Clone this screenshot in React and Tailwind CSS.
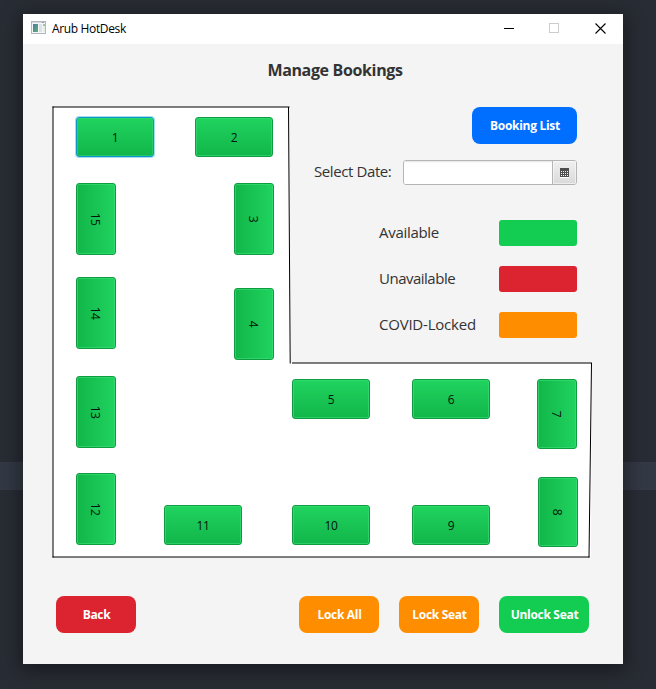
const UI_FONT = "font-['Open_Sans','Noto_Sans',sans-serif]";

// Desk positions are relative to the floor plan's top-left corner.
const desks = [
  { id: 1, x: 24, y: 11, w: 78, h: 40, focused: true },
  { id: 2, x: 143, y: 11, w: 78, h: 40 },
  { id: 3, x: 182, y: 77, w: 40, h: 72 },
  { id: 4, x: 182, y: 182, w: 40, h: 72 },
  { id: 5, x: 240, y: 273, w: 78, h: 40 },
  { id: 6, x: 360, y: 273, w: 78, h: 40 },
  { id: 7, x: 485, y: 273, w: 40, h: 70 },
  { id: 8, x: 486, y: 371, w: 40, h: 70 },
  { id: 9, x: 360, y: 399, w: 78, h: 40 },
  { id: 10, x: 240, y: 399, w: 78, h: 40 },
  { id: 11, x: 112, y: 399, w: 78, h: 40 },
  { id: 12, x: 24, y: 367, w: 40, h: 72 },
  { id: 13, x: 24, y: 270, w: 40, h: 72 },
  { id: 14, x: 24, y: 171, w: 40, h: 72 },
  { id: 15, x: 24, y: 77, w: 40, h: 72 },
];

const legend = [
  { label: "Available", color: "bg-[#13cc52]", tracking: "tracking-[-0.3px]" },
  { label: "Unavailable", color: "bg-[#dc2430]", tracking: "tracking-[-0.5px]" },
  { label: "COVID-Locked", color: "bg-[#ff8d00]", tracking: "tracking-[-0.22px]" },
];

function Desk({ desk }) {
  const vertical = desk.h > desk.w;
  return (
    <button
      className={`absolute flex items-center justify-center rounded-[3px] border text-[12px] leading-none text-[#02140a] ${
        vertical
          ? "bg-linear-to-l from-[#20d35f] to-[#11b649] pr-0.5"
          : "bg-linear-to-b from-[#20d35f] to-[#11b649] pt-0.5"
      } ${
        desk.focused
          ? "border-[#0a96c9] shadow-[0_0_0_1px_rgba(3,158,211,0.35),inset_0_0_0_1px_rgba(60,220,130,0.45)]"
          : "border-[#0f9c40] shadow-[inset_0_0_0_1px_rgba(60,224,120,0.6)]"
      }`}
      style={{ left: desk.x, top: desk.y, width: desk.w, height: desk.h }}
    >
      <span className={vertical ? "rotate-90 tracking-[-0.6px]" : "tracking-[-0.3px]"}>{desk.id}</span>
    </button>
  );
}

function FloorPlan() {
  return (
    <div className="relative col-start-1 row-start-1 h-[452px] w-[540px]">
      <svg className="block" width="540" height="452" viewBox="0 0 540 452">
        <path d="M1 1H237L238.5 257H540L539 451H1Z" fill="#fff" />
        <g stroke="#000" strokeWidth="1" fill="none">
          <path d="M0.5 1H237.5" />
          <path d="M1 0.5V451.5" />
          <path d="M0.5 451H537.5" />
          <path d="M236.5 1L238.2 257.5" />
          <path d="M240 257H540" />
          <path d="M539.5 257L537 451.5" />
        </g>
      </svg>
      {desks.map((d) => (
        <Desk key={d.id} desk={d} />
      ))}
    </div>
  );
}

function ActionButton({ className, children }) {
  return (
    <button
      className={`flex h-[37px] items-center justify-center rounded-[8px] pl-px text-[12px] font-bold tracking-[-0.3px] whitespace-nowrap text-white ${className}`}
    >
      {children}
    </button>
  );
}

function TitleBar() {
  return (
    <header className="flex h-[30px] items-center bg-white pl-2 text-black">
      <svg width="15" height="13" viewBox="0 0 15 13" className="-mt-1">
        <defs>
          <linearGradient id="pane" x1="0" y1="0" x2="1" y2="1">
            <stop offset="0" stopColor="#4b7ba0" />
            <stop offset="1" stopColor="#5fae7c" />
          </linearGradient>
        </defs>
        <rect x="0.5" y="0.5" width="14" height="12" fill="#f4f5f6" stroke="#b3b6bb" />
        <path d="M1 1.5H14" stroke="#d5d9df" />
        <path d="M11 1.5H13" stroke="#8aa2c0" />
        <rect x="2" y="3" width="5" height="8" fill="url(#pane)" />
        <rect x="8" y="3" width="3" height="8" fill="#dfe1e3" />
        <rect x="12" y="3" width="2" height="8" fill="#e3efe6" />
        <rect x="12" y="3" width="2" height="2" fill="#9ec5b4" />
      </svg>
      <span className="ml-1.5 text-[12px] tracking-[-0.35px]">Arub HotDesk</span>
      <div className="ml-auto flex items-center pr-[17px] pb-0.5">
        <svg width="10" height="10" viewBox="0 0 10 10" className="mr-[35px]">
          <path d="M0 5.5H10" stroke="#000" />
        </svg>
        <svg width="10" height="10" viewBox="0 0 10 10" fill="none" className="mr-9">
          <rect x="0.5" y="0.5" width="9" height="9" stroke="#ccc" />
        </svg>
        <svg width="11" height="11" viewBox="0 0 11 11">
          <path d="M0.5 0.5L10.5 10.5M10.5 0.5L0.5 10.5" stroke="#000" strokeWidth="1.1" />
        </svg>
      </div>
    </header>
  );
}

function DatePicker() {
  return (
    <div className="flex h-[25px] w-[174px] overflow-hidden rounded-[3px] border border-[#b5b5b5] bg-white">
      <input className="min-w-0 flex-1 bg-white shadow-[inset_0_2px_2px_-1px_#e4e4e4] outline-none" />
      <button className="flex w-6 items-center justify-center border-l border-[#b5b5b5] bg-linear-to-b from-[#f0f0f0] to-[#dadada] shadow-[inset_0_0_0_1px_rgba(255,255,255,0.5)]">
        <svg width="9" height="10" viewBox="0 0 9 10">
          <rect width="9" height="9" fill="#4d4d4d" />
          <path
            d="M1 3.5H8M1 5.5H8M1 7.5H8"
            stroke="#f2f2f2"
            strokeWidth="1"
            strokeDasharray="1 1"
          />
          <path d="M0 9.5H9" stroke="#fff" />
        </svg>
      </button>
    </div>
  );
}

export default function App() {
  return (
    <div className={`relative h-[689px] w-[656px] overflow-hidden bg-[#282c34] pt-[14px] pl-[23px] ${UI_FONT}`}>
      <div className="absolute top-[462px] left-0 h-7 w-full bg-[#323844]" />
      <main className="relative flex h-[650px] w-[600px] flex-col bg-[#f4f4f4] text-[#333] shadow-[0_4px_18px_3px_rgba(0,0,0,0.4)]">
        <TitleBar />
        <h1 className="flex h-[62px] items-center justify-center pb-[11px] pl-6 text-[16px] font-bold tracking-[-0.35px]">
          Manage Bookings
        </h1>
        <section className="ml-[29px] grid w-[540px]">
          <FloorPlan />
          <aside className="relative col-start-1 row-start-1 flex flex-col items-end self-start justify-self-end pt-px pr-[15px]">
            <ActionButton className="w-[105px] bg-[#006eff]">Booking List</ActionButton>
            <div className="mt-4 flex items-center">
              <label className="w-[89px] pb-0.5 text-[15px] leading-[23px] tracking-[-0.4px] whitespace-nowrap">Select Date:</label>
              <DatePicker />
            </div>
            <ul className="mt-[35px] flex w-[198px] flex-col gap-5">
              {legend.map((item) => (
                <li key={item.label} className="flex h-[26px] items-center justify-between">
                  <span className={`pb-0.5 text-[15px] whitespace-nowrap ${item.tracking}`}>{item.label}</span>
                  <span className={`h-[26px] w-[78px] rounded-[3px] ${item.color}`} />
                </li>
              ))}
            </ul>
          </aside>
        </section>
        <footer className="mt-[38px] flex gap-5 pr-[34px] pl-[33px]">
          <ActionButton className="mr-auto w-20 bg-[#dc2430]">Back</ActionButton>
          <ActionButton className="w-20 bg-[#ff8d00]">Lock All</ActionButton>
          <ActionButton className="w-20 bg-[#ff8d00]">Lock Seat</ActionButton>
          <ActionButton className="w-[90px] bg-[#13cc52]">Unlock Seat</ActionButton>
        </footer>
      </main>
    </div>
  );
}
